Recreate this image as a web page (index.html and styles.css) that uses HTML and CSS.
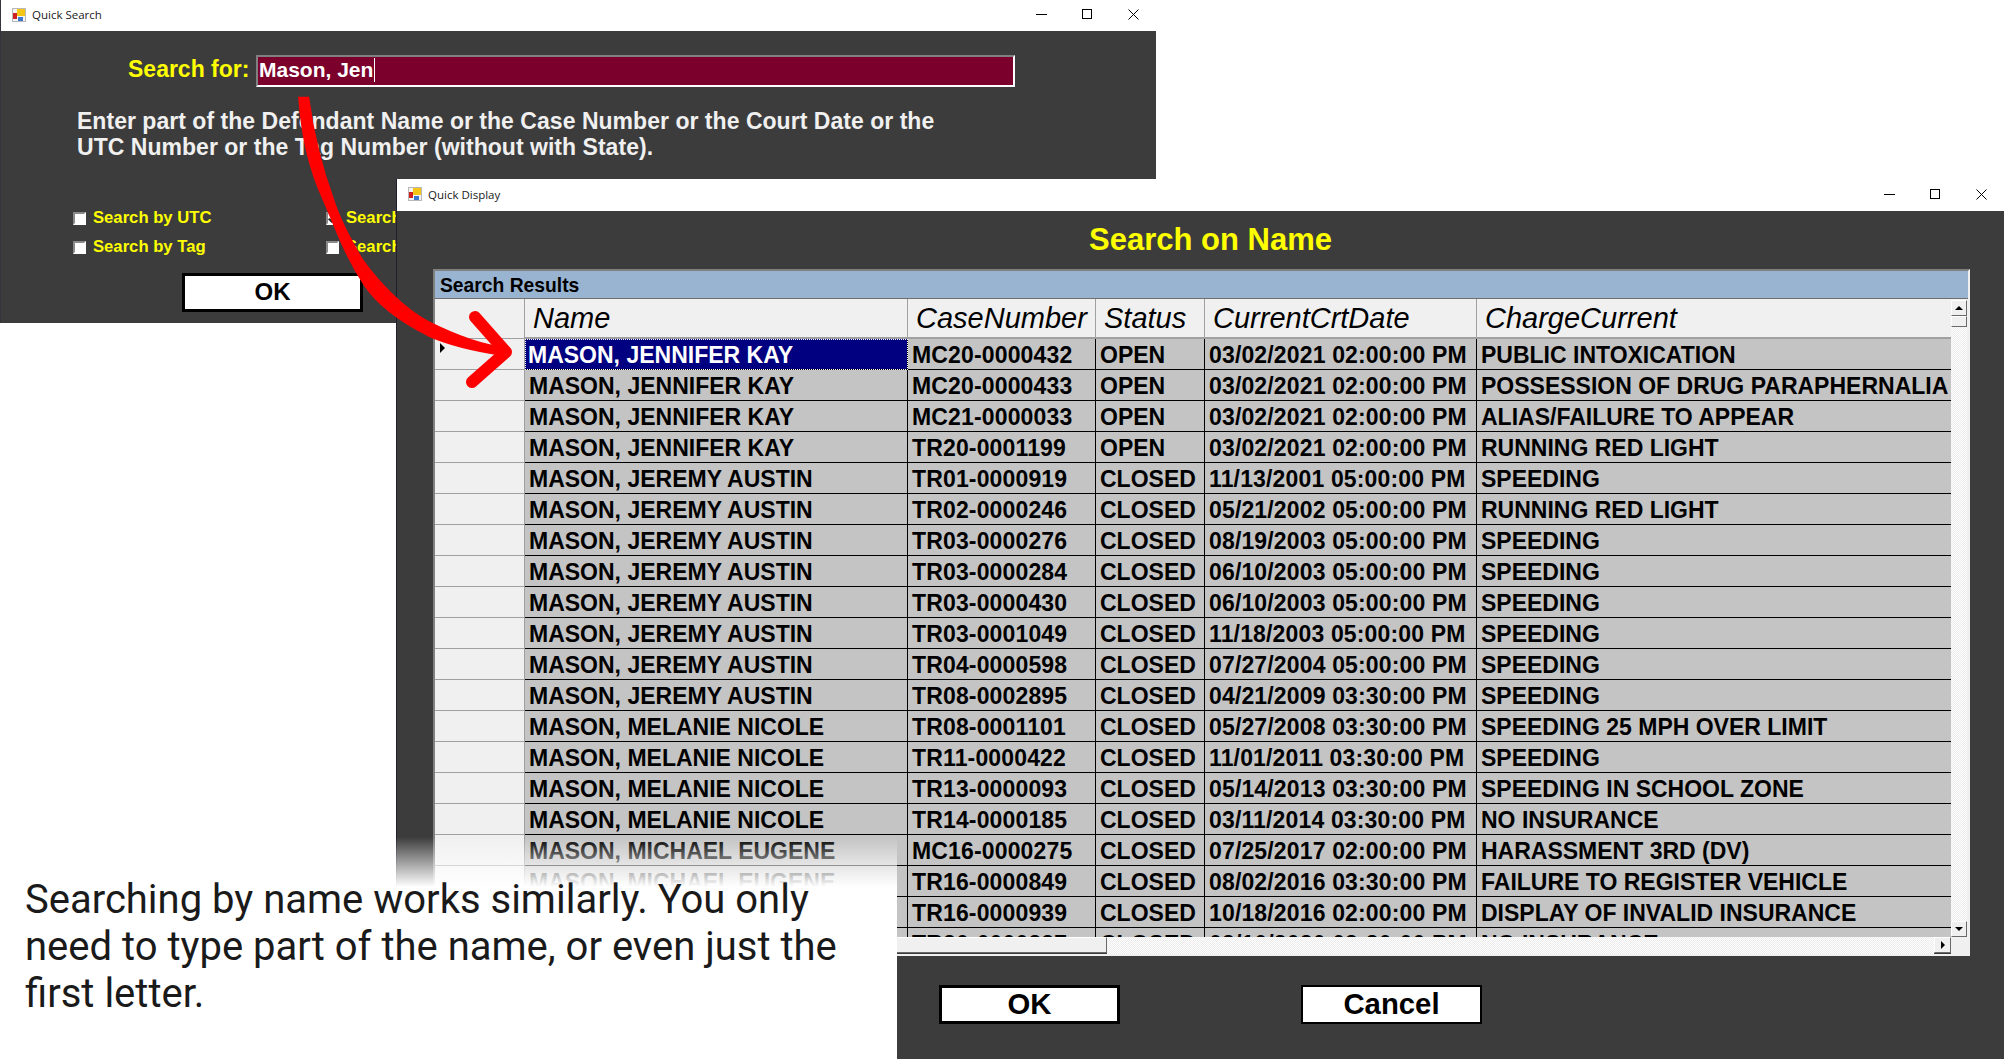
FILE: index.html
```html
<!DOCTYPE html>
<html lang="en">
  <head>
    <meta charset="UTF-8" />
    <meta name="viewport" content="width=device-width, initial-scale=1.0" />
    <title>Quick Search</title>
    <link rel="stylesheet" href="styles.css">
  </head>
  <body>
    <!-- back window -->
    <section class="window win-search">
      <header class="titlebar">
        <svg class="app-icon" viewBox="0 0 14 14"><rect x="0.5" y="0.5" width="13" height="13" fill="#f4f4f4" stroke="#b8b8b8"/><rect x="1" y="5" width="4" height="6" fill="#d02020"/><rect x="5" y="1" width="8" height="7" fill="#f5c518"/><rect x="6" y="9" width="5" height="4" fill="#3a78d0"/></svg>
        <span class="win-title">Quick Search</span>
        <div class="win-controls">
          <svg viewBox="0 0 11 11"><path d="M0 5.5H11" stroke="#000"/></svg>
          <svg viewBox="0 0 11 11"><rect x="0.5" y="0.5" width="9" height="9" fill="none" stroke="#000"/></svg>
          <svg viewBox="0 0 11 11"><path d="M0.5 0.5L10.5 10.5M10.5 0.5L0.5 10.5" stroke="#000"/></svg>
        </div>
      </header>
      <div class="search-body">
        <div class="search-row">
          <label class="search-label">Search for:</label>
          <div class="search-input"><span class="caret">Mason, Jen</span></div>
        </div>
        <p class="hint">Enter part of the Defendant Name or the Case Number or the Court Date or the<br />UTC Number or the Tag Number (without with State).</p>
        <div class="checks">
          <div class="check"><span class="box"></span>Search by UTC</div>
          <div class="check"><span class="box box-on"></span>Search by Name</div>
          <div class="check"><span class="box"></span>Search by Tag</div>
          <div class="check"><span class="box"></span>Search by Date</div>
        </div>
        <button class="btn btn-search" type="button">OK</button>
      </div>
    </section>

    <!-- front window -->
    <section class="window win-display">
      <header class="titlebar titlebar-front">
        <svg class="app-icon" viewBox="0 0 14 14"><rect x="0.5" y="0.5" width="13" height="13" fill="#f4f4f4" stroke="#b8b8b8"/><rect x="1" y="5" width="4" height="6" fill="#d02020"/><rect x="5" y="1" width="8" height="7" fill="#f5c518"/><rect x="6" y="9" width="5" height="4" fill="#3a78d0"/></svg>
        <span class="win-title">Quick Display</span>
        <div class="win-controls">
          <svg viewBox="0 0 11 11"><path d="M0 5.5H11" stroke="#000"/></svg>
          <svg viewBox="0 0 11 11"><rect x="0.5" y="0.5" width="9" height="9" fill="none" stroke="#000"/></svg>
          <svg viewBox="0 0 11 11"><path d="M0.5 0.5L10.5 10.5M10.5 0.5L0.5 10.5" stroke="#000"/></svg>
        </div>
      </header>
      <div class="display-body">
        <h1 class="display-title">Search on Name</h1>
        <div class="group">
          <div class="group-head">Search Results</div>
          <div class="grid-wrap">
            <div class="grid-view">
              <table class="grid">
                <colgroup>
                  <col class="c-head" /><col class="c-name" /><col class="c-case" /><col class="c-status" /><col class="c-date" /><col class="c-charge" />
                </colgroup>
                <thead>
                  <tr><th class="rowhead"></th><th>Name</th><th>CaseNumber</th><th>Status</th><th>CurrentCrtDate</th><th>ChargeCurrent</th></tr>
                </thead>
                <tbody>
                  <tr><td class="rowhead"><span class="row-mark"></span></td><td class="selected">MASON, JENNIFER KAY</td><td class="num">MC20-0000432</td><td>OPEN</td><td class="num">03/02/2021 02:00:00 PM</td><td>PUBLIC INTOXICATION</td></tr>
                  <tr><td class="rowhead"></td><td>MASON, JENNIFER KAY</td><td class="num">MC20-0000433</td><td>OPEN</td><td class="num">03/02/2021 02:00:00 PM</td><td>POSSESSION OF DRUG PARAPHERNALIA</td></tr>
                  <tr><td class="rowhead"></td><td>MASON, JENNIFER KAY</td><td class="num">MC21-0000033</td><td>OPEN</td><td class="num">03/02/2021 02:00:00 PM</td><td>ALIAS/FAILURE TO APPEAR</td></tr>
                  <tr><td class="rowhead"></td><td>MASON, JENNIFER KAY</td><td class="num">TR20-0001199</td><td>OPEN</td><td class="num">03/02/2021 02:00:00 PM</td><td>RUNNING RED LIGHT</td></tr>
                  <tr><td class="rowhead"></td><td>MASON, JEREMY AUSTIN</td><td class="num">TR01-0000919</td><td>CLOSED</td><td class="num">11/13/2001 05:00:00 PM</td><td>SPEEDING</td></tr>
                  <tr><td class="rowhead"></td><td>MASON, JEREMY AUSTIN</td><td class="num">TR02-0000246</td><td>CLOSED</td><td class="num">05/21/2002 05:00:00 PM</td><td>RUNNING RED LIGHT</td></tr>
                  <tr><td class="rowhead"></td><td>MASON, JEREMY AUSTIN</td><td class="num">TR03-0000276</td><td>CLOSED</td><td class="num">08/19/2003 05:00:00 PM</td><td>SPEEDING</td></tr>
                  <tr><td class="rowhead"></td><td>MASON, JEREMY AUSTIN</td><td class="num">TR03-0000284</td><td>CLOSED</td><td class="num">06/10/2003 05:00:00 PM</td><td>SPEEDING</td></tr>
                  <tr><td class="rowhead"></td><td>MASON, JEREMY AUSTIN</td><td class="num">TR03-0000430</td><td>CLOSED</td><td class="num">06/10/2003 05:00:00 PM</td><td>SPEEDING</td></tr>
                  <tr><td class="rowhead"></td><td>MASON, JEREMY AUSTIN</td><td class="num">TR03-0001049</td><td>CLOSED</td><td class="num">11/18/2003 05:00:00 PM</td><td>SPEEDING</td></tr>
                  <tr><td class="rowhead"></td><td>MASON, JEREMY AUSTIN</td><td class="num">TR04-0000598</td><td>CLOSED</td><td class="num">07/27/2004 05:00:00 PM</td><td>SPEEDING</td></tr>
                  <tr><td class="rowhead"></td><td>MASON, JEREMY AUSTIN</td><td class="num">TR08-0002895</td><td>CLOSED</td><td class="num">04/21/2009 03:30:00 PM</td><td>SPEEDING</td></tr>
                  <tr><td class="rowhead"></td><td>MASON, MELANIE NICOLE</td><td class="num">TR08-0001101</td><td>CLOSED</td><td class="num">05/27/2008 03:30:00 PM</td><td>SPEEDING 25 MPH OVER LIMIT</td></tr>
                  <tr><td class="rowhead"></td><td>MASON, MELANIE NICOLE</td><td class="num">TR11-0000422</td><td>CLOSED</td><td class="num">11/01/2011 03:30:00 PM</td><td>SPEEDING</td></tr>
                  <tr><td class="rowhead"></td><td>MASON, MELANIE NICOLE</td><td class="num">TR13-0000093</td><td>CLOSED</td><td class="num">05/14/2013 03:30:00 PM</td><td>SPEEDING IN SCHOOL ZONE</td></tr>
                  <tr><td class="rowhead"></td><td>MASON, MELANIE NICOLE</td><td class="num">TR14-0000185</td><td>CLOSED</td><td class="num">03/11/2014 03:30:00 PM</td><td>NO INSURANCE</td></tr>
                  <tr><td class="rowhead"></td><td>MASON, MICHAEL EUGENE</td><td class="num">MC16-0000275</td><td>CLOSED</td><td class="num">07/25/2017 02:00:00 PM</td><td>HARASSMENT 3RD (DV)</td></tr>
                  <tr><td class="rowhead"></td><td>MASON, MICHAEL EUGENE</td><td class="num">TR16-0000849</td><td>CLOSED</td><td class="num">08/02/2016 03:30:00 PM</td><td>FAILURE TO REGISTER VEHICLE</td></tr>
                  <tr><td class="rowhead"></td><td></td><td class="num">TR16-0000939</td><td>CLOSED</td><td class="num">10/18/2016 02:00:00 PM</td><td>DISPLAY OF INVALID INSURANCE</td></tr>
                  <tr><td class="rowhead"></td><td></td><td class="num">TR20-0000337</td><td>CLOSED</td><td class="num">03/10/2020 03:30:00 PM</td><td>NO INSURANCE</td></tr>
                </tbody>
              </table>
            </div>
            <div class="vscroll">
              <span class="sb-btn sb-btn-v"><i class="tri tri-up"></i></span>
              <span class="sb-thumb-v"></span>
              <span class="sb-track"></span>
              <span class="sb-btn sb-btn-v"><i class="tri tri-down"></i></span>
            </div>
          </div>
          <div class="hscroll">
            <span class="sb-thumb-h"></span>
            <span class="sb-track"></span>
            <span class="sb-btn sb-btn-h"><i class="tri tri-right"></i></span>
            <span class="sb-corner"></span>
          </div>
        </div>
        <div class="display-actions">
          <button class="btn btn-ok" type="button">OK</button>
          <button class="btn btn-cancel" type="button">Cancel</button>
        </div>
      </div>
    </section>

    <!-- red hand-drawn arrow across both windows -->
    <svg class="arrow" viewBox="0 0 560 400" width="560" height="400">
      <path d="M299.5 98C302 135 310 170 324 200C335 225 345 255 365 285C375 300 395 318 428 335C450 345 478 351 505 355L505 348C478 345 450 333 428 322C405 310 380 285 362 260C350 240 340 222 333 200C322 170 313 135 308 98Z" fill="#fe0000" stroke="#fe0000" stroke-width="2.5"/>
      <path d="M475 317L506 352L472 382" fill="none" stroke="#fe0000" stroke-width="12" stroke-linecap="round" stroke-linejoin="round"/>
    </svg>

    <div class="note">
      <p class="note-text">Searching by name works similarly. You only need to type part of the name, or even just the first letter.</p>
    </div>
  </body>
</html>
```

FILE: styles.css
```css
html,
body {
  margin: 0;
  padding: 0;
}
body {
  position: relative;
  width: 2004px;
  height: 1059px;
  overflow: hidden;
  background-color: #fff;
  font-family: "Liberation Sans", Arial, sans-serif;
}

/* windows */
.window {
  position: absolute;
  background-color: #3c3c3c;
  box-sizing: border-box;
}
.win-search {
  left: 0;
  top: 0;
  width: 1156px;
  height: 323px;
  border-left: 1px solid #34343c;
}
.win-display {
  left: 396px;
  top: 179px;
  width: 1608px;
  height: 880px;
  border-left: 1px solid #20202c;
}
.titlebar {
  box-sizing: border-box;
  display: flex;
  align-items: center;
  height: 31px;
  padding: 0 0 2px 11px;
  background-color: #fff;
}
.titlebar-front {
  height: 32px;
}
.app-icon {
  width: 14px;
  height: 14px;
  margin-right: 6px;
}
.win-title {
  font-family: "Open Sans", sans-serif;
  font-size: 11.5px;
  color: #1a1a1a;
}
.win-controls {
  display: flex;
  gap: 35px;
  margin-left: auto;
  margin-right: 17px;
}
.win-controls svg {
  width: 11px;
  height: 11px;
}

/* quick search */
.search-body {
  padding: 24px 0 0 72px;
}
.search-row {
  display: flex;
  align-items: center;
  padding-left: 55px;
  gap: 7px;
}
.search-label {
  font-size: 23px;
  font-weight: bold;
  color: #ff0;
  width: 121px;
  padding-bottom: 3px;
  white-space: nowrap;
}
.search-input {
  box-sizing: border-box;
  width: 759px;
  height: 32px;
  padding-left: 1px;
  border: 2px solid #fff;
  border-top-color: #808080;
  border-left-color: #808080;
  background-color: #7b002b;
  color: #fff;
  font-size: 21px;
  font-weight: bold;
  line-height: 26px;
}
.caret {
  display: inline-block;
  height: 24px;
  line-height: 24px;
  padding-right: 1px;
  border-right: 1px solid #fff;
}
.hint {
  margin: 21px 0 0 4px;
  font-size: 23px;
  font-weight: bold;
  line-height: 26px;
  letter-spacing: 0.03px;
  color: #f0f0f0;
  white-space: nowrap;
}
.checks {
  display: grid;
  grid-template-columns: 253px 253px;
  grid-auto-rows: 29px;
  margin-top: 44px;
}
.check {
  display: flex;
  align-items: center;
  gap: 7px;
  padding-bottom: 1px;
  box-sizing: border-box;
  font-size: 16.67px;
  font-weight: bold;
  color: #ff0;
  white-space: nowrap;
}
.box {
  box-sizing: border-box;
  position: relative;
  width: 13px;
  height: 13px;
  background-color: #fff;
  border: 2px solid #fff;
  border-top-color: #8a8a8a;
  border-left-color: #8a8a8a;
}
.box-on::after {
  content: "";
  position: absolute;
  left: 2px;
  top: 0;
  width: 3px;
  height: 6px;
  border-right: 2px solid #222;
  border-bottom: 2px solid #222;
  transform: rotate(40deg);
}
.btn {
  box-sizing: border-box;
  background-color: #fff;
  border: 2px solid #000;
  border-radius: 0;
  color: #000;
  font-family: "Liberation Sans", Arial, sans-serif;
  font-weight: bold;
  padding: 0 0 2px;
}
.btn-search {
  display: block;
  width: 181px;
  height: 39px;
  margin: 11px 0 0 109px;
  border-width: 3px;
  font-size: 24px;
}

/* quick display */
.display-body {
  display: flex;
  flex-direction: column;
}
.display-title {
  box-sizing: border-box;
  margin: 0;
  height: 58px;
  padding-left: 20px;
  line-height: 58px;
  font-size: 31px;
  font-weight: bold;
  color: #ff0;
  text-align: center;
}
.group {
  box-sizing: border-box;
  width: 1537px;
  height: 687px;
  margin-left: 36px;
  border: 2px solid #f0f0f0;
  border-top-color: #808080;
  border-left-color: #808080;
}
.group-head {
  box-sizing: border-box;
  height: 28px;
  padding-left: 5px;
  background-color: #99b4d1;
  border-bottom: 1px solid #6f6f6f;
  font-size: 19.3px;
  font-weight: bold;
  line-height: 29px;
  color: #000;
}
.grid-wrap {
  display: flex;
  height: 638px;
  background-color: #f0f0f0;
}
.grid-view {
  width: 1516px;
  height: 638px;
  overflow: hidden;
}
.grid {
  table-layout: fixed;
  width: 1516px;
  border-collapse: separate;
  border-spacing: 0;
}
.c-head { width: 90px; }
.c-name { width: 383px; }
.c-case { width: 188px; }
.c-status { width: 109px; }
.c-date { width: 272px; }
.c-charge { width: 474px; }
.grid th {
  box-sizing: border-box;
  height: 40px;
  padding: 0 0 0 8px;
  background-color: #f0f0f0;
  border-right: 1px solid #a0a0a0;
  border-bottom: 2px solid #a0a0a0;
  font-size: 29px;
  font-style: italic;
  font-weight: normal;
  text-align: left;
  white-space: nowrap;
  overflow: hidden;
  color: #000;
}
.grid th:last-child,
.grid td:last-child {
  border-right: none;
}
.grid td {
  box-sizing: border-box;
  height: 31px;
  padding: 2px 0 0 4px;
  background-color: #c4c4c4;
  border-right: 1px solid #000;
  border-bottom: 1px solid #000;
  font-size: 23px;
  font-weight: bold;
  line-height: 28px;
  vertical-align: top;
  white-space: nowrap;
  overflow: hidden;
  color: #000;
}
.grid .num {
  letter-spacing: 0.15px;
}
.grid .rowhead {
  position: relative;
  padding: 0;
  background-color: #f0f0f0;
  border-right: 1px solid #a0a0a0;
  border-bottom: 1px solid #a0a0a0;
}
.row-mark {
  position: absolute;
  left: 5px;
  top: 4px;
  border-left: 5px solid #000;
  border-top: 5px solid transparent;
  border-bottom: 5px solid transparent;
}
.grid .selected {
  background-color: #000080;
  color: #fff;
  outline: 1px dotted #fff;
  outline-offset: -1px;
  padding-left: 3px;
}

/* scrollbars */
.vscroll {
  display: flex;
  flex-direction: column;
  width: 16px;
  padding-top: 1px;
  box-sizing: border-box;
}
.sb-track {
  flex: 1;
  background-color: #fff;
  background-image: conic-gradient(#ececec 25%, #fff 0 50%, #ececec 0 75%, #fff 0);
  background-size: 2px 2px;
}
.sb-btn,
.sb-thumb-v,
.sb-thumb-h {
  box-sizing: border-box;
  display: flex;
  align-items: center;
  justify-content: center;
  flex: none;
  background-color: #f0f0f0;
  border: 1px solid #fff;
  border-right-color: #696969;
  border-bottom-color: #696969;
}
.sb-btn-v {
  width: 16px;
  height: 16px;
}
.sb-thumb-v {
  width: 16px;
  height: 11px;
}
.hscroll {
  display: flex;
  height: 17px;
}
.sb-thumb-h {
  width: 672px;
  height: 16px;
}
.sb-btn-h {
  width: 17px;
  height: 16px;
}
.sb-corner {
  width: 17px;
  background-color: #f0f0f0;
}
.tri {
  display: block;
  width: 0;
  height: 0;
}
.tri-up {
  border-left: 4px solid transparent;
  border-right: 4px solid transparent;
  border-bottom: 4px solid #000;
}
.tri-down {
  border-left: 4px solid transparent;
  border-right: 4px solid transparent;
  border-top: 4px solid #000;
}
.tri-right {
  border-top: 4px solid transparent;
  border-bottom: 4px solid transparent;
  border-left: 4px solid #000;
}
.display-actions {
  display: flex;
  gap: 181px;
  margin: 29px 0 0 542px;
}
.btn-ok,
.btn-cancel {
  width: 181px;
  height: 39px;
  font-size: 29.33px;
  line-height: 32px;
}
.btn-ok {
  border-width: 3px;
}

/* overlays */
.arrow {
  position: absolute;
  left: 0;
  top: 0;
  pointer-events: none;
}
.note {
  position: absolute;
  left: 0;
  top: 837px;
  box-sizing: border-box;
  width: 897px;
  height: 222px;
  padding: 39px 0 0 25px;
  background-image: linear-gradient(rgba(255, 255, 255, 0), #fff 50px);
}
.note-text {
  margin: 0;
  width: 835px;
  font-family: Roboto, sans-serif;
  font-size: 40px;
  line-height: 47px;
  color: #1a1a1a;
}
```
